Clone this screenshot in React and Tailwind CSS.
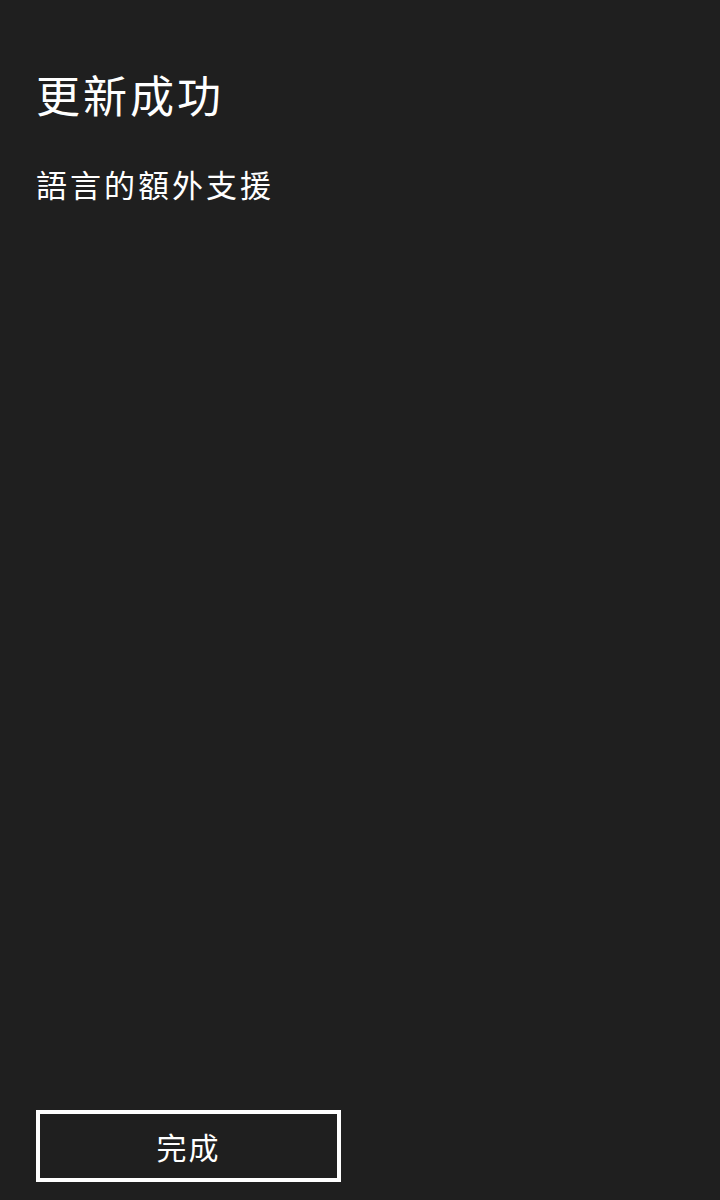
import React from 'react'

const App = () => {
  return (
    <div
      className="w-[720px] h-[1200px] bg-[#1f1f1f] text-white flex flex-col px-9"
      style={{ fontFamily: '"Noto Sans CJK TC", "Noto Sans", sans-serif' }}
    >
      <h1 className="mt-[64px] text-[44px] leading-[60px] tracking-[3px] font-normal">更新成功</h1>
      <p className="mt-[40px] text-[31px] leading-[40px] tracking-[3px]">語言的額外支援</p>
      <div className="flex-1" />
      <button className="mb-[18px] w-[305px] h-[72px] border-4 border-white text-[30px] tracking-[2px] flex items-center justify-center">
        完成
      </button>
    </div>
  )
}

export default App
